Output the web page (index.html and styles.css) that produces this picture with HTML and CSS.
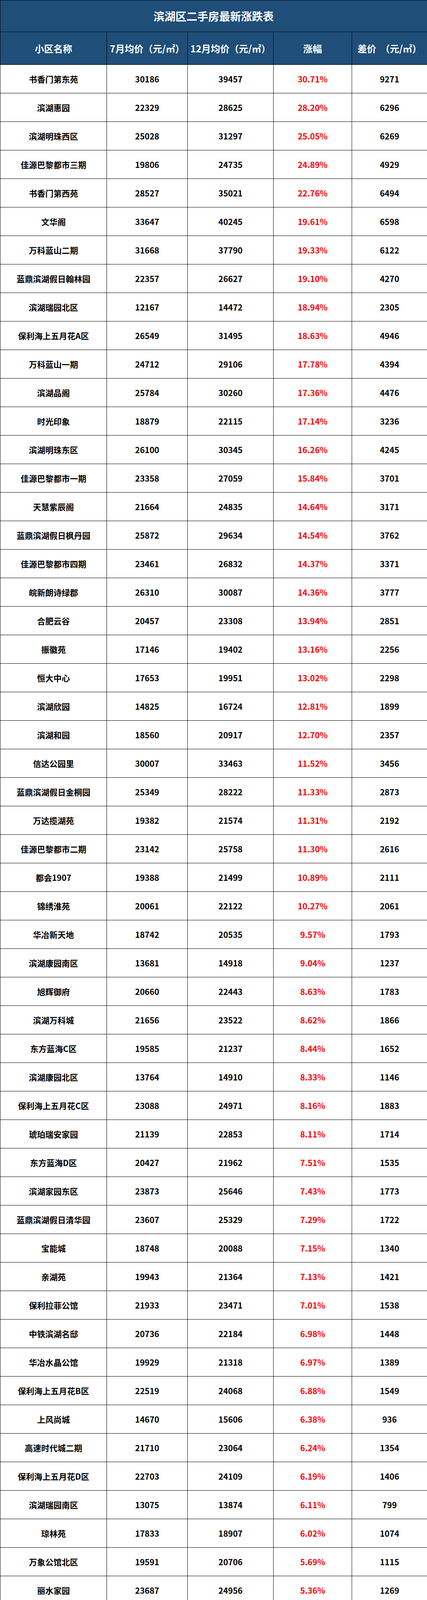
FILE: index.html
```html
<!DOCTYPE html>
<html lang="zh-CN">
<head>
<meta charset="utf-8">
<title>滨湖区二手房最新涨跌表</title>
<link rel="stylesheet" href="styles.css">
</head>
<body>
<table class="sheet">
<colgroup>
<col class="c-name"><col class="c-jul"><col class="c-dec"><col class="c-rate"><col class="c-diff">
</colgroup>
<thead>
<tr class="title-row"><th colspan="5">滨湖区二手房最新涨跌表</th></tr>
<tr class="head-row"><th>小区名称</th><th>7月均价（元/㎡）</th><th>12月均价（元/㎡）</th><th>涨幅</th><th>差价&nbsp;&nbsp;（元/㎡）</th></tr>
</thead>
<tbody>
<tr><td>书香门第东苑</td><td>30186</td><td>39457</td><td class="up">30.71%</td><td>9271</td></tr>
<tr><td>滨湖惠园</td><td>22329</td><td>28625</td><td class="up">28.20%</td><td>6296</td></tr>
<tr><td>滨湖明珠西区</td><td>25028</td><td>31297</td><td class="up">25.05%</td><td>6269</td></tr>
<tr><td>佳源巴黎都市三期</td><td>19806</td><td>24735</td><td class="up">24.89%</td><td>4929</td></tr>
<tr><td>书香门第西苑</td><td>28527</td><td>35021</td><td class="up">22.76%</td><td>6494</td></tr>
<tr><td>文华阁</td><td>33647</td><td>40245</td><td class="up">19.61%</td><td>6598</td></tr>
<tr><td>万科蓝山二期</td><td>31668</td><td>37790</td><td class="up">19.33%</td><td>6122</td></tr>
<tr><td>蓝鼎滨湖假日翰林园</td><td>22357</td><td>26627</td><td class="up">19.10%</td><td>4270</td></tr>
<tr><td>滨湖瑞园北区</td><td>12167</td><td>14472</td><td class="up">18.94%</td><td>2305</td></tr>
<tr><td>保利海上五月花A区</td><td>26549</td><td>31495</td><td class="up">18.63%</td><td>4946</td></tr>
<tr><td>万科蓝山一期</td><td>24712</td><td>29106</td><td class="up">17.78%</td><td>4394</td></tr>
<tr><td>滨湖品阁</td><td>25784</td><td>30260</td><td class="up">17.36%</td><td>4476</td></tr>
<tr><td>时光印象</td><td>18879</td><td>22115</td><td class="up">17.14%</td><td>3236</td></tr>
<tr><td>滨湖明珠东区</td><td>26100</td><td>30345</td><td class="up">16.26%</td><td>4245</td></tr>
<tr><td>佳源巴黎都市一期</td><td>23358</td><td>27059</td><td class="up">15.84%</td><td>3701</td></tr>
<tr><td>天慧紫辰阁</td><td>21664</td><td>24835</td><td class="up">14.64%</td><td>3171</td></tr>
<tr><td>蓝鼎滨湖假日枫丹园</td><td>25872</td><td>29634</td><td class="up">14.54%</td><td>3762</td></tr>
<tr><td>佳源巴黎都市四期</td><td>23461</td><td>26832</td><td class="up">14.37%</td><td>3371</td></tr>
<tr><td>皖新朗诗绿郡</td><td>26310</td><td>30087</td><td class="up">14.36%</td><td>3777</td></tr>
<tr><td>合肥云谷</td><td>20457</td><td>23308</td><td class="up">13.94%</td><td>2851</td></tr>
<tr><td>振徽苑</td><td>17146</td><td>19402</td><td class="up">13.16%</td><td>2256</td></tr>
<tr><td>恒大中心</td><td>17653</td><td>19951</td><td class="up">13.02%</td><td>2298</td></tr>
<tr><td>滨湖欣园</td><td>14825</td><td>16724</td><td class="up">12.81%</td><td>1899</td></tr>
<tr><td>滨湖和园</td><td>18560</td><td>20917</td><td class="up">12.70%</td><td>2357</td></tr>
<tr><td>信达公园里</td><td>30007</td><td>33463</td><td class="up">11.52%</td><td>3456</td></tr>
<tr><td>蓝鼎滨湖假日金桐园</td><td>25349</td><td>28222</td><td class="up">11.33%</td><td>2873</td></tr>
<tr><td>万达揽湖苑</td><td>19382</td><td>21574</td><td class="up">11.31%</td><td>2192</td></tr>
<tr><td>佳源巴黎都市二期</td><td>23142</td><td>25758</td><td class="up">11.30%</td><td>2616</td></tr>
<tr><td>都会1907</td><td>19388</td><td>21499</td><td class="up">10.89%</td><td>2111</td></tr>
<tr><td>锦绣淮苑</td><td>20061</td><td>22122</td><td class="up">10.27%</td><td>2061</td></tr>
<tr><td>华冶新天地</td><td>18742</td><td>20535</td><td class="up">9.57%</td><td>1793</td></tr>
<tr><td>滨湖康园南区</td><td>13681</td><td>14918</td><td class="up">9.04%</td><td>1237</td></tr>
<tr><td>旭辉御府</td><td>20660</td><td>22443</td><td class="up">8.63%</td><td>1783</td></tr>
<tr><td>滨湖万科城</td><td>21656</td><td>23522</td><td class="up">8.62%</td><td>1866</td></tr>
<tr><td>东方蓝海C区</td><td>19585</td><td>21237</td><td class="up">8.44%</td><td>1652</td></tr>
<tr><td>滨湖康园北区</td><td>13764</td><td>14910</td><td class="up">8.33%</td><td>1146</td></tr>
<tr><td>保利海上五月花C区</td><td>23088</td><td>24971</td><td class="up">8.16%</td><td>1883</td></tr>
<tr><td>琥珀瑞安家园</td><td>21139</td><td>22853</td><td class="up">8.11%</td><td>1714</td></tr>
<tr><td>东方蓝海D区</td><td>20427</td><td>21962</td><td class="up">7.51%</td><td>1535</td></tr>
<tr><td>滨湖家园东区</td><td>23873</td><td>25646</td><td class="up">7.43%</td><td>1773</td></tr>
<tr><td>蓝鼎滨湖假日清华园</td><td>23607</td><td>25329</td><td class="up">7.29%</td><td>1722</td></tr>
<tr><td>宝能城</td><td>18748</td><td>20088</td><td class="up">7.15%</td><td>1340</td></tr>
<tr><td>亲湖苑</td><td>19943</td><td>21364</td><td class="up">7.13%</td><td>1421</td></tr>
<tr><td>保利拉菲公馆</td><td>21933</td><td>23471</td><td class="up">7.01%</td><td>1538</td></tr>
<tr><td>中铁滨湖名邸</td><td>20736</td><td>22184</td><td class="up">6.98%</td><td>1448</td></tr>
<tr><td>华冶水晶公馆</td><td>19929</td><td>21318</td><td class="up">6.97%</td><td>1389</td></tr>
<tr><td>保利海上五月花B区</td><td>22519</td><td>24068</td><td class="up">6.88%</td><td>1549</td></tr>
<tr><td>上风尚城</td><td>14670</td><td>15606</td><td class="up">6.38%</td><td>936</td></tr>
<tr><td>高速时代城二期</td><td>21710</td><td>23064</td><td class="up">6.24%</td><td>1354</td></tr>
<tr><td>保利海上五月花D区</td><td>22703</td><td>24109</td><td class="up">6.19%</td><td>1406</td></tr>
<tr><td>滨湖瑞园南区</td><td>13075</td><td>13874</td><td class="up">6.11%</td><td>799</td></tr>
<tr><td>琼林苑</td><td>17833</td><td>18907</td><td class="up">6.02%</td><td>1074</td></tr>
<tr><td>万象公馆北区</td><td>19591</td><td>20706</td><td class="up">5.69%</td><td>1115</td></tr>
<tr><td>丽水家园</td><td>23687</td><td>24956</td><td class="up">5.36%</td><td>1269</td></tr>
<tr><td>高速时代城一期</td><td>21627</td><td>22650</td><td class="up">4.73%</td><td>1023</td></tr>
<tr><td>文一豪门金地</td><td>20473</td><td>21427</td><td class="up">4.66%</td><td>954</td></tr>
<tr><td>东方蓝海E区</td><td>19932</td><td>20854</td><td class="up">4.63%</td><td>922</td></tr>
<tr><td>联投中心书城</td><td>20509</td><td>21419</td><td class="up">4.44%</td><td>910</td></tr>
<tr><td>临滨苑</td><td>17699</td><td>18331</td><td class="up">3.57%</td><td>632</td></tr>
<tr><td>东方蓝海A区</td><td>20148</td><td>20867</td><td class="up">3.57%</td><td>719</td></tr>
<tr><td>徽贵苑</td><td>18064</td><td>18661</td><td class="up">3.30%</td><td>597</td></tr>
<tr><td>东方蓝海B区</td><td>20394</td><td>20940</td><td class="up">2.68%</td><td>546</td></tr>
<tr><td>春融苑</td><td>18927</td><td>19363</td><td class="up">2.30%</td><td>436</td></tr>
<tr><td>临湖苑E区</td><td>20140</td><td>20428</td><td class="up">1.43%</td><td>288</td></tr>
<tr><td>蓝鼎观湖苑</td><td>18729</td><td>18834</td><td class="up">0.56%</td><td>105</td></tr>
<tr><td>信达银杏尚郡北区</td><td>19914</td><td>19970</td><td class="up">0.28%</td><td>56</td></tr>
<tr><td>徽杰苑</td><td>18416</td><td>18419</td><td class="up">0.02%</td><td>3</td></tr>
<tr><td>树荫苑</td><td>18672</td><td>18632</td><td class="down">-0.21%</td><td>-40</td></tr>
<tr><td>文一名门湖语</td><td>26162</td><td>25908</td><td class="down">-0.97%</td><td>-254</td></tr>
<tr><td>金泉小区</td><td>26554</td><td>24924</td><td class="down">-6.14%</td><td>-1630</td></tr>
<tr class="short"><td>万科时代之光</td><td>29035</td><td>26764</td><td class="down">-7.82%</td><td>-2271</td></tr>
<tr class="short last"><td>信达银杏尚郡南区</td><td>23200</td><td>20438</td><td class="down">-11.91%</td><td>-2762</td></tr>
</tbody>
</table>
</body>
</html>
```

FILE: styles.css
```css
html, body {
  margin: 0;
  padding: 0;
  background: #ffffff;
}

.sheet {
  width: 1094px;
  table-layout: fixed;
  border-collapse: collapse;
  font-family: "Noto Sans CJK SC", "Microsoft YaHei", sans-serif;
  font-weight: 700;
  color: #000000;
}

.c-name { width: 273px; }
.c-jul { width: 207px; }
.c-dec { width: 220px; }
.c-rate { width: 201px; }
.c-diff { width: 193px; }

.sheet th,
.sheet td {
  border: 1px solid #000000;
  padding: 0;
  text-align: center;
  vertical-align: middle;
  white-space: nowrap;
  overflow: hidden;
}

.title-row th {
  height: 80px;
  background: #1f4e79;
  color: #ffffff;
  font-size: 28px;
  font-weight: 700;
  line-height: 1;
}

.head-row th {
  height: 83px;
  background: #1f4e79;
  color: #ffffff;
  font-size: 24px;
  font-weight: 700;
  line-height: 1;
}

.sheet td {
  height: 72px;
  font-size: 21px;
  line-height: 1;
}

.sheet tr.short td {
  height: 59px;
}

.sheet tr.last td {
  height: 58px;
}

.sheet td.up {
  color: #ff0000;
}

.sheet td.down {
  color: #00b050;
}
```
